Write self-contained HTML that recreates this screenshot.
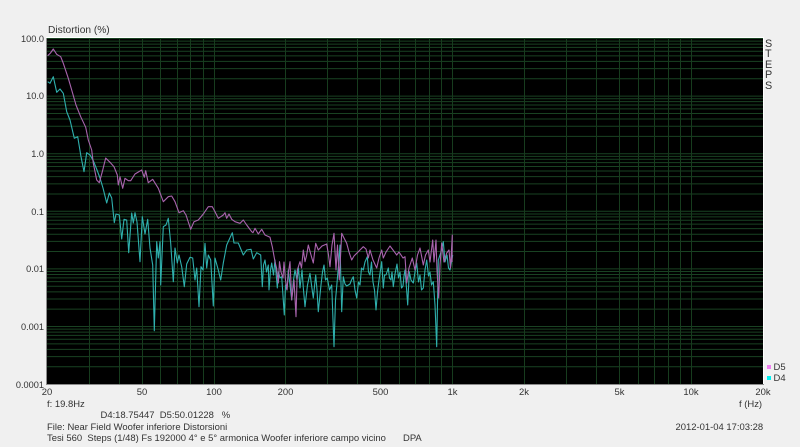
<!DOCTYPE html>
<html>
<head>
<meta charset="utf-8">
<style>
html,body{margin:0;padding:0;background:#f0f0f0;width:800px;height:447px;overflow:hidden}
#p{position:relative;width:800px;height:447px;font-family:"Liberation Sans",Arial,sans-serif;font-size:9.45px;color:#333}
#p span{position:absolute;white-space:pre;line-height:12px;height:12px}
.yl{right:756px;text-align:right;font-size:9.2px}
.xl{transform:translateX(-50%)}
svg{position:absolute;left:0;top:0}
</style>
</head>
<body>
<div id="p">
<svg width="800" height="447" viewBox="0 0 800 447">
<rect x="46" y="37" width="718" height="348" fill="#fff"/>
<rect x="46" y="38" width="1" height="347" fill="#8c8c8c"/>
<rect x="46" y="384" width="718" height="1" fill="#8c8c8c"/>
<rect x="47" y="38" width="716" height="346" fill="#000"/>
<defs>
<path id="d" d="M47 .5H763M47 3.14H763M47 6.08H763M47 9.42H763M47 13.28H763M47 17.84H763M47 23.42H763M47 30.62H763M47 40.76H763" fill="none" stroke="#194222" stroke-width="1"/>
</defs>
<use href="#d" y="38"/>
<use href="#d" y="95.6"/>
<use href="#d" y="153.2"/>
<use href="#d" y="210.8"/>
<use href="#d" y="268.4"/>
<use href="#d" y="326"/>
<path d="M89.5 38V384M119.5 38V384M142.5 38V384M160.5 38V384M177.5 38V384M190.5 38V384M203.5 38V384M214.5 38V384M285.5 38V384M327.5 38V384M357.5 38V384M380.5 38V384M399.5 38V384M415.5 38V384M429.5 38V384M441.5 38V384M452.5 38V384M524.5 38V384M566.5 38V384M596.5 38V384M619.5 38V384M638.5 38V384M654.5 38V384M668.5 38V384M680.5 38V384M691.5 38V384" fill="none" stroke="#173c1e" stroke-width="1"/>
<polyline fill="none" stroke="#2fb0ae" stroke-width="1.1" stroke-linejoin="round" points="47.7,81.7 50,83.3 53.3,76.7 56.7,92.3 60,89 63.3,93.3 66.7,111.7 70,120 74.3,138.3 77.7,136.7 81,156.7 84,171.7 86.7,152.7 90,155 93.3,160.7 97,170 100,178 103,188 106.7,203 109.3,193 111.7,198 114.3,222.7 116,214 119.3,215 121.7,239 124,219.3 126.7,220 128.7,252.7 131.7,213 133.3,223 135,212.7 137,222 140,261.7 142.3,216.7 145,234 147.7,219.3 150,248 152.7,265 154.3,330.7 156.7,241.7 158.3,258 160,241.7 160.7,285 163.3,226.7 166,225 168.3,218.3 170.7,243.3 173.3,281.7 175,248 177.3,263 179,255 181.7,266.7 184.3,286.7 186.7,264 190,257.3 192.7,258 195,280 196.7,268 199,306.7 201,266.7 203,270 205,243.3 206.7,268 208.3,255 210.7,260 213.3,306 215,258 218.3,270 220.7,280 223.3,263 226.7,245 232.3,232.7 234,243 238.3,243 243.3,255 246.7,250 251,249.3 253.3,259 256.7,252.7 260.7,255 262.3,286.7 263.5,265 265,260 266.5,272 268.3,265 269,290 270.5,270 271.7,263 273.5,275 275,260 277.3,288 278.5,272 280,278 281.7,276.7 284.3,315 285.5,285 287,290 288.3,270 290,285 291.7,300 293.5,280 295,270 297,280 298.5,268 300,288 302,270 303.5,290 305,306.7 307.5,285 310,273.3 311.5,285 313.3,298 315.7,275 317,290 318.3,311.7 321,285 322.5,272 324,265 325.5,280 327.3,278 329.5,290 331.7,285 334,346.7 335.5,300 336.7,286.7 338.5,265 340,245 341.7,311.7 343.3,276.7 345,284 346.7,286 350,284 351.5,280 353.3,276.7 355,290 356.7,298 358.5,282 360,285 361.5,268 363.3,270 365,262 367.3,256.7 368.5,272 370,275 371.5,262 373,282 374.5,290 376,310 377.5,292 379,280 380.5,270 381.7,261.7 383.3,288 384.5,275 386,275 388.3,268 389.5,278 391,280 392,272 393.3,286.7 395,274 397,264 398.5,278 400,272 401.5,288 403,286 404,276 405,270 406.5,288 407.7,305 409.3,271.7 411,280 413.3,283 415,272 416.7,263 418.5,282 420,275 421.5,290 423.3,288 425,270 426.7,260 428.5,276 430,272 431.5,285 433.3,281.7 435,305 436.7,346.7 438.3,260 441,252 443.3,241.7 445,262 447,255 448.5,268 450,270 452.7,255"/>
<polyline fill="none" stroke="#a964ae" stroke-width="1.1" stroke-linejoin="round" points="47.7,55.7 50.5,53 53.3,49 56.7,54.3 60.7,56.7 63.3,63.3 68.3,78.3 71.7,90 76,105 80.7,116.7 85.7,127.3 88.3,140 91.7,150 93.3,163.3 96.7,180 99.3,182.7 102.3,171.7 105.7,158 110,162.3 114,166.7 117.3,175 118.3,185 120,176.7 122.7,188.3 125,178.3 128.3,180.7 130.7,180.7 135,174 141.7,170 144.3,177.3 145.7,170.7 148.3,182.7 152.7,179.3 158.3,188.3 163.3,201.7 168.3,196.7 171.7,196 175,201.7 179,212.7 183.3,210.7 186,215 190.7,229.3 194,221.7 198.3,220 203.3,214 208.3,206.7 212.3,206.7 215,211.7 218.3,218.3 223.3,215 225,212.7 226.7,218.3 229,214 231.7,219.3 235,221.7 240,223.3 243.3,220 246.7,225 251.7,231.7 253,232.7 255,228.3 258.3,234 261.7,229.3 265,235 270,237.3 272.3,246.7 275,261.7 276.5,268 278.3,283 279.5,261.7 281,272 283,278 284,262 285.5,280 287,290 288.5,272 290,261.7 291.7,300 294,280 296,316.7 297.3,270 300,261.7 301.5,268 303.3,250 305,261.7 306.5,256 308.3,245 311,255 313.3,263 315.7,243.3 318.3,250 322,246 326.7,244 328.5,255 330,266.7 332,245 334,233.3 336,270 337.5,245 339.3,280 341.7,233.3 344,238 346.7,243.3 349,252 351.7,260 354,256 356.7,253.3 360,250 363.3,246.7 366,249 368.3,258 370,250 373,260 376.7,268 379,258 381.7,250 383.3,258 386,252 390,246 393,250 396.7,255 399,252 403,258 405,256.7 406.7,283 409,268 412.3,258 415,270 417.5,255 420,248 423.3,265 425.5,255 428.3,250 430,262 432.7,240 434,262 436,240 437,270 438.7,298 440,265 441.7,243 444,262 446.7,253 449,250 450.5,268 452.3,235 452,262"/>
<rect x="767" y="365" width="4" height="4" fill="#f080f0"/>
<rect x="767" y="376" width="4" height="4" fill="#00f0f0"/>
</svg>
<span style="left:48px;top:25px;font-size:10.2px">Distortion (%)</span>
<span class="yl" style="top:32.5px">100.0</span>
<span class="yl" style="top:90px">10.0</span>
<span class="yl" style="top:147.5px">1.0</span>
<span class="yl" style="top:205.5px">0.1</span>
<span class="yl" style="top:263px">0.01</span>
<span class="yl" style="top:320.5px">0.001</span>
<span class="yl" style="top:378.5px">0.0001</span>
<span class="xl" style="left:47px;top:387px">20</span>
<span class="xl" style="left:142px;top:387px">50</span>
<span class="xl" style="left:214px;top:387px">100</span>
<span class="xl" style="left:285.5px;top:387px">200</span>
<span class="xl" style="left:380.5px;top:387px">500</span>
<span class="xl" style="left:452.5px;top:387px">1k</span>
<span class="xl" style="left:524px;top:387px">2k</span>
<span class="xl" style="left:619.5px;top:387px">5k</span>
<span class="xl" style="left:691px;top:387px">10k</span>
<span class="xl" style="left:763px;top:387px">20k</span>
<span style="left:47px;top:399px">f: 19.8Hz</span>
<span style="left:100.5px;top:410px">D4:18.75447  D5:50.01228   %</span>
<span style="left:47px;top:422px">File: Near Field Woofer inferiore Distorsioni</span>
<span style="left:47px;top:433px">Tesi 560  Steps (1/48) Fs 192000 4° e 5° armonica Woofer inferiore campo vicino</span>
<span style="left:403px;top:433px">DPA</span>
<span style="left:739px;top:399px">f (Hz)</span>
<span style="left:675.5px;top:422px">2012-01-04 17:03:28</span>
<span style="left:773.5px;top:361.5px">D5</span>
<span style="left:773.5px;top:372.5px">D4</span>
<span style="left:765px;top:38px;font-size:10.8px">S</span>
<span style="left:765px;top:48px;font-size:10.8px">T</span>
<span style="left:765px;top:58.5px;font-size:10.8px">E</span>
<span style="left:765px;top:69px;font-size:10.8px">P</span>
<span style="left:765px;top:79.5px;font-size:10.8px">S</span>
</div>
</body>
</html>
